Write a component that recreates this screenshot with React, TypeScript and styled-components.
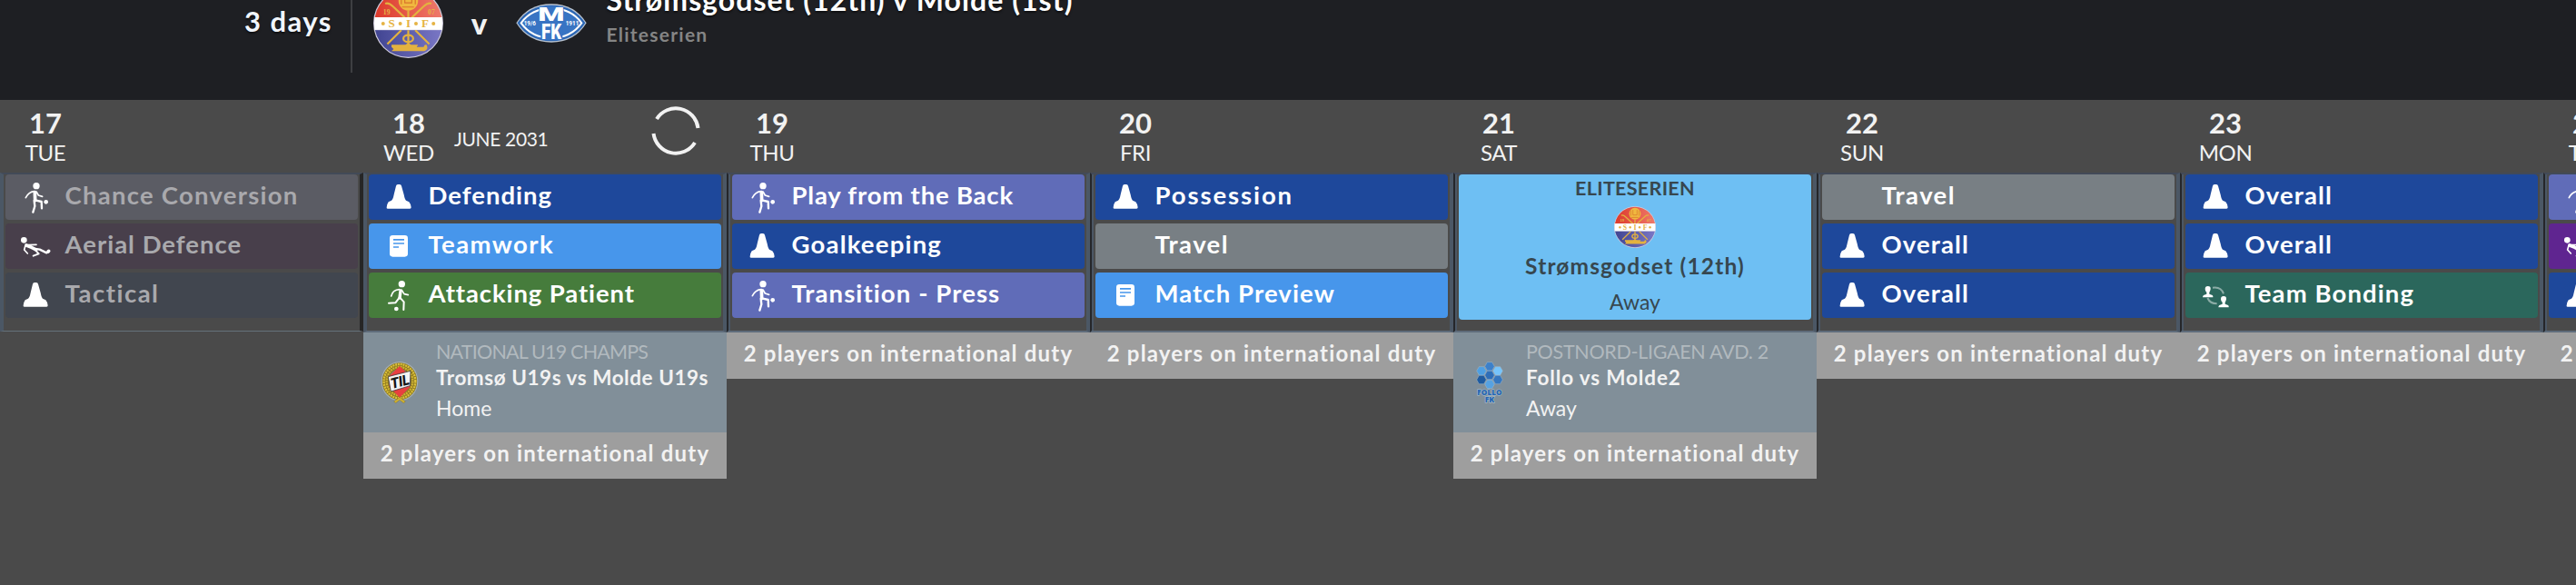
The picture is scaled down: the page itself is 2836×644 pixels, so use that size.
import React from 'react'

import styled, {createGlobalStyle, css} from 'styled-components'

const GlobalStyle = createGlobalStyle`
    * {
        box-sizing: border-box;
    }

    body {
        margin: 0;
        overflow: hidden;
        background: #4a4a4a;
        font-family: Lato, 'Liberation Sans', sans-serif;
        font-variant-ligatures: none;
        color: #f2f2f2;
    }
`

type IconName = 'kick' | 'tackle' | 'cone' | 'note' | 'run' | 'bonding'

interface Session {
    title: string
    color: string
    icon?: IconName
    spacing?: number
}

interface Fixture {
    crest: 'tromso' | 'follo'
    competition: string
    competitionSpacing: number
    title: string
    titleSpacing: number
    venue: string
}

interface Day {
    date: number
    weekday: string
    month?: string
    past?: boolean
    sessions?: Session[]
    fixture?: Fixture
    duty?: boolean
}

const COLORS = {
    general: '#1e489b',
    review: '#4796eb',
    attacking: '#467c3c',
    tactical: '#606cb8',
    travel: '#787f84',
    bonding: '#2b675c',
    defending: '#5f2590',
}

const DAYS: Day[] = [
    {
        date: 17,
        weekday: 'TUE',
        past: true,
        sessions: [
            {title: 'Chance Conversion', color: '#5b5c64', icon: 'kick', spacing: 1.25},
            {title: 'Aerial Defence', color: '#483f4b', icon: 'tackle', spacing: 1},
            {title: 'Tactical', color: '#41464f', icon: 'cone', spacing: 1.5},
        ],
    },
    {
        date: 18,
        weekday: 'WED',
        month: 'JUNE 2031',
        sessions: [
            {title: 'Defending', color: COLORS.general, icon: 'cone', spacing: 1},
            {title: 'Teamwork', color: COLORS.review, icon: 'note', spacing: 1.4},
            {title: 'Attacking Patient', color: COLORS.attacking, icon: 'run', spacing: 0.9},
        ],
        fixture: {
            crest: 'tromso',
            competition: 'NATIONAL U19 CHAMPS',
            competitionSpacing: -0.8,
            title: 'Tromsø U19s vs Molde U19s',
            titleSpacing: 0.55,
            venue: 'Home',
        },
        duty: true,
    },
    {
        date: 19,
        weekday: 'THU',
        sessions: [
            {title: 'Play from the Back', color: COLORS.tactical, icon: 'kick', spacing: 0.8},
            {title: 'Goalkeeping', color: COLORS.general, icon: 'cone', spacing: 1.2},
            {title: 'Transition - Press', color: COLORS.tactical, icon: 'kick'},
        ],
        duty: true,
    },
    {
        date: 20,
        weekday: 'FRI',
        sessions: [
            {title: 'Possession', color: COLORS.general, icon: 'cone', spacing: 1.9},
            {title: 'Travel', color: COLORS.travel, spacing: 1.4},
            {title: 'Match Preview', color: COLORS.review, icon: 'note'},
        ],
        duty: true,
    },
    {
        date: 21,
        weekday: 'SAT',
        fixture: {
            crest: 'follo',
            competition: 'POSTNORD-LIGAEN AVD. 2',
            competitionSpacing: -0.3,
            title: 'Follo vs Molde2',
            titleSpacing: 0.85,
            venue: 'Away',
        },
        duty: true,
    },
    {
        date: 22,
        weekday: 'SUN',
        sessions: [
            {title: 'Travel', color: COLORS.travel, spacing: 1.4},
            {title: 'Overall', color: COLORS.general, icon: 'cone'},
            {title: 'Overall', color: COLORS.general, icon: 'cone'},
        ],
        duty: true,
    },
    {
        date: 23,
        weekday: 'MON',
        sessions: [
            {title: 'Overall', color: COLORS.general, icon: 'cone'},
            {title: 'Overall', color: COLORS.general, icon: 'cone'},
            {title: 'Team Bonding', color: COLORS.bonding, icon: 'bonding'},
        ],
        duty: true,
    },
    {
        date: 24,
        weekday: 'TUE',
        sessions: [
            {title: 'Chance Conversion', color: COLORS.tactical, icon: 'kick'},
            {title: 'Aerial Defence', color: COLORS.defending, icon: 'tackle'},
            {title: 'Tactical', color: COLORS.general, icon: 'cone'},
        ],
        duty: true,
    },
]

const SessionIcon = ({name, background}: {name?: IconName; background: string}) => (
    <IconStyled viewBox="0 0 108 108">
        {name === 'kick' && (
            <>
                <circle cx="57" cy="17" r="11" fill="#fff" />
                <circle cx="89" cy="70" r="7" fill="#fff" />
                <path d="M49 35Q31 38 22 56" strokeWidth="5" />
                <path d="M57 36L64 48L77 52" strokeWidth="5" />
                <path d="M52 38L53 65" strokeWidth="11" />
                <path d="M53 64L74 69L75 91" strokeWidth="7" />
                <path d="M50 66L52 84L46 104" strokeWidth="7" />
            </>
        )}
        {name === 'tackle' && (
            <>
                <circle cx="16" cy="34" r="10" fill="#fff" />
                <path d="M24 51L37 56L56 66" strokeWidth="11" />
                <path d="M30 50L57 49" strokeWidth="5" />
                <path d="M21 52L17 66L28 78" strokeWidth="5" />
                <path d="M48 62L68 65L91 76L98 70" strokeWidth="7" />
                <path d="M96 72L98 70" strokeWidth="11" />
                <path d="M52 65L65 79L47 86" strokeWidth="6" />
            </>
        )}
        {name === 'cone' && (
            <path
                d="M45 17Q46 12 51 12H57Q62 12 63 17L71 46Q74 62 78 65L88 70Q93 75 95 88Q95 92 91 92H17Q13 92 14 88Q16 75 20 70L30 65Q35 62 38 46Z"
                fill="#fff"
                stroke="none"
            />
        )}
        {name === 'note' && (
            <>
                <rect x="24" y="18" width="60" height="71" rx="10" fill="#fff" stroke="none" />
                <path
                    d="M36 32.500H72M36 45H72M36 57H54"
                    stroke={background}
                    strokeWidth="5"
                    strokeLinecap="butt"
                />
            </>
        )}
        {name === 'run' && (
            <>
                <circle cx="64" cy="17" r="11" fill="#fff" />
                <circle cx="46" cy="99" r="7" fill="#fff" />
                <path d="M56 35Q34 36 29 57" strokeWidth="5" />
                <path d="M64 37L72 50L85 53" strokeWidth="5" />
                <path d="M60 39L57 63" strokeWidth="10" />
                <path d="M56 62L43 79L21 80" strokeWidth="6" />
                <path d="M58 62L71 76L70 102" strokeWidth="6" />
            </>
        )}
        {name === 'bonding' && (
            <>
                <g opacity="0.45" strokeLinecap="butt">
                    <path d="M45 29Q73 25 81 49" strokeWidth="6" />
                    <path d="M28 63Q36 82 59 82" strokeWidth="6" />
                </g>
                <g fill="#fff" stroke="none">
                    <path d="M29 24Q39 24 38 34Q37 41 34 44V50L44 54Q47 56 46 61H12Q12 56 15 54L25 50V44Q20 41 20 34Q20 24 29 24Z" />
                    <path d="M81 57Q91 57 90 67Q89 74 86 77V83L96 87Q99 89 98 94H64Q64 89 67 87L77 83V77Q72 74 72 67Q72 57 81 57Z" />
                </g>
            </>
        )}
    </IconStyled>
)

const StromsgodsetCrest = ({size}: {size: number}) => (
    <svg width={size} height={size} viewBox="0 0 100 100">
        <defs>
            <linearGradient id="sif-red" x1="0" x2="1">
                <stop offset="0" stopColor="#dc3829" />
                <stop offset="1" stopColor="#ef7b6d" />
            </linearGradient>
            <linearGradient id="sif-blue" x1="0" x2="1">
                <stop offset="0" stopColor="#3f4390" />
                <stop offset="1" stopColor="#7b78c6" />
            </linearGradient>
            <clipPath id="sif-clip">
                <circle cx="50" cy="50" r="48.500" />
            </clipPath>
        </defs>
        <circle cx="50" cy="50" r="50" fill="#cfcbdc" />
        <g clipPath="url(#sif-clip)">
            <rect width="100" height="42" fill="url(#sif-red)" />
            <rect y="60" width="100" height="40" fill="url(#sif-blue)" />
        </g>
        <g fill="none" stroke="#e3b23f" strokeWidth="2.800">
            <path d="M17 22Q22 20 28 26L45 42M83 22Q78 20 72 26L55 42M50 32V42" />
            <path d="M40 60L20 80M60 60L80 80M50 60V80" />
            <ellipse cx="50" cy="72" rx="7" ry="5" />
        </g>
        <circle cx="50" cy="18" r="14" fill="#f0b83f" />
        <path d="M40 10V23M45 9V21H55V9M60 10V23M41 27H58" fill="none" stroke="#d9742c" strokeWidth="1.500" />
        <path d="M1.500 41.500H98.500V59.500H1.500Z" fill="#fff" />
        <g fill="#e5b344" fontFamily="Liberation Serif, serif" fontWeight="700" textAnchor="middle">
            <text x="26" y="56" fontSize="17">S</text>
            <text x="50" y="56" fontSize="17">I</text>
            <text x="74" y="56" fontSize="17">F</text>
            <text x="19" y="38" fontSize="10">19</text>
            <text x="83" y="38" fontSize="10">07</text>
            <circle cx="14" cy="50.500" r="2.600" />
            <circle cx="38.500" cy="50.500" r="2.600" />
            <circle cx="61" cy="50.500" r="2.600" />
            <circle cx="86" cy="50.500" r="2.600" />
        </g>
        <path
            d="M26 81H46L50 78L54 81H64L62 84H72Q73 80 76 81Q80 87 73 90H26L29 87L26 84Z"
            fill="#e3b23f"
        />
    </svg>
)

const MoldeCrest = () => (
    <svg width="78" height="43" viewBox="0 0 234 129">
        <path d="M1 64Q40 1 117 1T233 64Q194 128 117 128T1 64Z" fill="#b9c3d0" />
        <path d="M5 64Q43 5 117 5T229 64Q191 124 117 124T5 64Z" fill="#2b66b4" />
        <path d="M17 64Q52 16 117 16T217 64Q182 113 117 113T17 64Z" fill="#3874c3" stroke="#fff" strokeWidth="6" />
        <path d="M78 8H156L164 62H154V120H82V62H70Z" fill="#3874c3" />
        <g fill="#fff" fontFamily="Roboto, sans-serif" fontWeight="900" textAnchor="middle">
            <text x="117" y="57" fontSize="62" textLength="88" lengthAdjust="spacingAndGlyphs">M</text>
            <text x="117" y="117" fontSize="72" textLength="66" lengthAdjust="spacingAndGlyphs">FK</text>
            <text x="46" y="71" fontSize="19" fontWeight="700">19/6</text>
            <text x="186" y="71" fontSize="19" fontWeight="700">1911</text>
        </g>
    </svg>
)

const TromsoCrest = () => (
    <svg width="42" height="46" viewBox="0 0 126 138">
        <ellipse cx="63" cy="65" rx="61" ry="65" fill="#b3babd" opacity="0.7" />
        <ellipse cx="63" cy="65" rx="47" ry="51" fill="#85877f" stroke="#8a771f" strokeWidth="21" />
        <ellipse cx="63" cy="65" rx="52" ry="56" fill="none" stroke="#dcc03a" strokeWidth="7" strokeDasharray="6 2.5" />
        <ellipse cx="63" cy="65" rx="43" ry="47" fill="none" stroke="#cdb032" strokeWidth="7" strokeDasharray="6 2.5" />
        <path d="M44 132L63 118L82 132L76 137L63 127L50 137Z" fill="#d0b230" stroke="#6d5c18" />
        <path d="M63 15L97 47V84L63 119L29 84V47Z" fill="#e8403f" />
        <path d="M25 50L99 31L97 80L34 99Z" fill="#f4f4f4" stroke="#222" strokeWidth="2" />
        <text
            x="64"
            y="83"
            fontFamily="Roboto, sans-serif"
            fontSize="48"
            fontWeight="900"
            fontStyle="italic"
            fill="#151515"
            textAnchor="middle"
            textLength="62"
            lengthAdjust="spacingAndGlyphs"
            transform="rotate(-14 63 66)"
        >
            TIL
        </text>
    </svg>
)

const HEXES = [
    {x: 45, y: 16, fill: '#3c80ca'},
    {x: 18, y: 31, fill: '#4f9fe2'},
    {x: 72, y: 31, fill: '#76c4fb'},
    {x: 45, y: 45, fill: '#2e6eb8'},
    {x: 18, y: 60, fill: '#1f5ba0'},
    {x: 72, y: 60, fill: '#3577c0'},
    {x: 45, y: 75, fill: '#57a2e2'},
]

const FolloCrest = () => (
    <svg width="30" height="46" viewBox="0 0 90 138">
        {HEXES.map(({x, y, fill}) => (
            <path
                key={`${x}-${y}`}
                d={`M${x - 16} ${y}L${x - 8} ${y - 14}H${x + 8}L${x + 16} ${y}L${x + 8} ${y + 14}H${x - 8}Z`}
                fill={fill}
                stroke="#a5bac9"
                strokeWidth="1.500"
            />
        ))}
        <g
            fill="#2566b2"
            stroke="#b3c5d2"
            strokeWidth="3"
            paintOrder="stroke"
            fontFamily="Open Sans, sans-serif"
            fontWeight="800"
            fontSize="26"
            textAnchor="middle"
        >
            <text x="45" y="111" textLength="82" lengthAdjust="spacingAndGlyphs">FOLLO</text>
            <text x="45" y="135" textLength="32" lengthAdjust="spacingAndGlyphs">FK</text>
        </g>
    </svg>
)

const Spinner = () => (
    <SpinnerStyled viewBox="-27 -27 54 54">
        <path d="M-21 -13A24.700 24.700 0 0 1 24.500 -3" />
        <path d="M21 13A24.700 24.700 0 0 1 -24.500 3" />
    </SpinnerStyled>
)

const SessionRow = ({title, color, icon, spacing, past}: Session & {past?: boolean}) => (
    <SessionStyled $color={color} $past={past}>
        <SessionIcon name={icon} background={color} />
        <SessionTitle $spacing={spacing}>{title}</SessionTitle>
    </SessionStyled>
)

const MatchCard = () => (
    <MatchStyled>
        <MatchCompetition>ELITESERIEN</MatchCompetition>
        <StromsgodsetCrest size={46} />
        <MatchTeam>Strømsgodset (12th)</MatchTeam>
        <MatchVenue>Away</MatchVenue>
    </MatchStyled>
)

const FixtureBlock = ({crest, competition, competitionSpacing, title, titleSpacing, venue}: Fixture) => (
    <FixtureStyled>
        <FixtureCrest>{crest === 'tromso' ? <TromsoCrest /> : <FolloCrest />}</FixtureCrest>
        <div>
            <FixtureCompetition $spacing={competitionSpacing}>{competition}</FixtureCompetition>
            <FixtureTitle $spacing={titleSpacing}>{title}</FixtureTitle>
            <FixtureVenue>{venue}</FixtureVenue>
        </div>
    </FixtureStyled>
)

const DayColumn = ({date, weekday, month, past, sessions, fixture, duty}: Day) => (
    <DayStyled>
        <DayHeader>
            <DateStyled>
                <DateNumber>{date}</DateNumber>
                <Weekday>{weekday}</Weekday>
            </DateStyled>
            {month && (
                <>
                    <Month>{month}</Month>
                    <Spinner />
                </>
            )}
        </DayHeader>
        <Slots $past={past} $divided={!past && !month}>
            {sessions ? (
                sessions.map((session, index) => <SessionRow key={index} {...session} past={past} />)
            ) : (
                <MatchCard />
            )}
        </Slots>
        {fixture && <FixtureBlock {...fixture} />}
        {duty && <Duty>2 players on international duty</Duty>}
    </DayStyled>
)

export default function App() {
    return (
        <>
            <GlobalStyle />
            <PageStyled>
                <NextMatch>
                    <Countdown>3 days</Countdown>
                    <Teams>
                        <StromsgodsetCrest size={77} />
                        <Versus>v</Versus>
                        <MoldeCrest />
                    </Teams>
                    <MatchInfo>
                        <MatchTitle>Strømsgodset (12th) v Molde (1st)</MatchTitle>
                        <MatchLeague>Eliteserien</MatchLeague>
                    </MatchInfo>
                </NextMatch>
                <Calendar>
                    {DAYS.map(day => (
                        <DayColumn key={day.date} {...day} />
                    ))}
                </Calendar>
            </PageStyled>
        </>
    )
}

const PageStyled = styled.div`
    width: 2836px;
    height: 644px;
    overflow: hidden;
    white-space: nowrap;
`

const NextMatch = styled.header`
    display: flex;
    align-items: flex-start;
    height: 110px;
    background: #1e1f23;
`

const Countdown = styled.div`
    width: 388px;
    height: 80px;
    padding: 4px 20px 0 0;
    border-right: 2px solid #3e3f42;
    font-size: 31px;
    font-weight: 700;
    line-height: 38px;
    letter-spacing: 1.5px;
    text-align: right;
    color: #f1f6fd;
    text-shadow: 0 2px 2px rgba(0, 0, 0, 0.5);
`

const Teams = styled.div`
    display: flex;
    align-items: center;
    height: 77px;
    margin: -13.5px 0 0 22.5px;
`

const Versus = styled.span`
    width: 80px;
    font-size: 33px;
    font-weight: 900;
    line-height: 40px;
    text-align: center;
`

const MatchInfo = styled.div`
    margin: -20px 0 0 22px;
`

const MatchTitle = styled.h1`
    margin: 0;
    font-size: 32px;
    font-weight: 700;
    line-height: 40px;
    letter-spacing: 1.05px;
    color: #fff;
    text-shadow: 0 2px 2px rgba(0, 0, 0, 0.5);
`

const MatchLeague = styled.div`
    padding-top: 5px;
    font-size: 21px;
    font-weight: 700;
    line-height: 26px;
    letter-spacing: 1.25px;
    color: #858585;
`

const Calendar = styled.main`
    display: grid;
    grid-template-columns: repeat(8, 400px);
    align-items: start;
`

const DayStyled = styled.section`
    display: flex;
    flex-direction: column;
`

const DayHeader = styled.div`
    display: flex;
    height: 80px;
`

const DateStyled = styled.div`
    width: 100px;
    padding-top: 6px;
    text-align: center;
`

const DateNumber = styled.div`
    font-size: 31px;
    font-weight: 700;
    line-height: 38px;
`

const Weekday = styled.div`
    font-size: 24px;
    line-height: 28px;
    letter-spacing: -0.4px;
`

const Month = styled.div`
    flex: 1;
    padding-top: 29px;
    font-size: 21px;
    line-height: 28px;
    letter-spacing: -0.35px;
`

const SpinnerStyled = styled.svg`
    width: 54px;
    height: 54px;
    margin: 6.5px 29px 0 0;
    fill: none;
    stroke: #f2f2f2;
    stroke-width: 4;
`

const Slots = styled.div<{$past?: boolean; $divided?: boolean}>`
    display: flex;
    flex-direction: column;
    gap: 4px;
    height: 176px;
    padding: 0 2px;
    border: solid #4b5765;
    border-width: 2px 4px;
    border-top-color: #424a58;
    border-bottom-color: #5f6c7b;

    ${({$divided}) =>
        $divided &&
        css`
            padding-left: 4px;
            border-left: 2px solid #25262a;
            box-shadow: inset 2px 0 #4b5765;
        `}

    ${({$past}) =>
        $past &&
        css`
            height: 175px;
            border-right-color: #262626;
            border-bottom: 1px solid #65717b;
        `}
`

const SessionStyled = styled.div<{$color: string; $past?: boolean}>`
    display: flex;
    align-items: center;
    height: 50px;
    padding-left: 15px;
    gap: 14.5px;
    border-radius: 4px;
    background: ${({$color}) => $color};
    color: ${({$past}) => ($past ? '#a9a9ad' : '#fff')};
`

const IconStyled = styled.svg`
    flex: none;
    width: 36px;
    height: 36px;
    fill: none;
    stroke: #fff;
    stroke-linecap: round;
    stroke-linejoin: round;

    circle {
        stroke: none;
    }
`

const SessionTitle = styled.span<{$spacing?: number}>`
    padding-bottom: 4px;
    font-size: 27.5px;
    font-weight: 700;
    line-height: 34px;
    letter-spacing: ${({$spacing = 1.1}) => $spacing}px;
`

const MatchStyled = styled.div`
    display: flex;
    flex: none;
    flex-direction: column;
    align-items: center;
    height: 160px;
    border-radius: 4px;
    background: #6ebff3;
    color: #37474f;
`

const MatchCompetition = styled.div`
    height: 35px;
    padding-top: 2px;
    font-size: 21.5px;
    font-weight: 700;
    line-height: 26px;
    letter-spacing: 0.3px;
`

const MatchTeam = styled.div`
    height: 39px;
    padding-top: 5px;
    font-size: 24.5px;
    font-weight: 700;
    line-height: 30px;
    letter-spacing: 1.15px;
`

const MatchVenue = styled.div`
    padding-top: 5px;
    font-size: 23px;
    line-height: 30px;
`

const FixtureStyled = styled.div`
    display: flex;
    height: 110px;
    background: #818f99;
`

const FixtureCrest = styled.div`
    display: flex;
    justify-content: center;
    align-items: center;
    width: 80px;
`

const FixtureCompetition = styled.div<{$spacing: number}>`
    padding-top: 7px;
    font-size: 21.5px;
    line-height: 28px;
    letter-spacing: ${({$spacing}) => $spacing}px;
    color: #b1b9be;
`

const FixtureTitle = styled.div<{$spacing: number}>`
    font-size: 22.5px;
    font-weight: 700;
    line-height: 30px;
    letter-spacing: ${({$spacing}) => $spacing}px;
`

const FixtureVenue = styled.div`
    padding-top: 2px;
    font-size: 23px;
    line-height: 32px;
`

const Duty = styled.div`
    height: 51px;
    padding-top: 6px;
    background: #9e9e9e;
    font-size: 24px;
    font-weight: 700;
    line-height: 34px;
    letter-spacing: 1.2px;
    text-align: center;
`
